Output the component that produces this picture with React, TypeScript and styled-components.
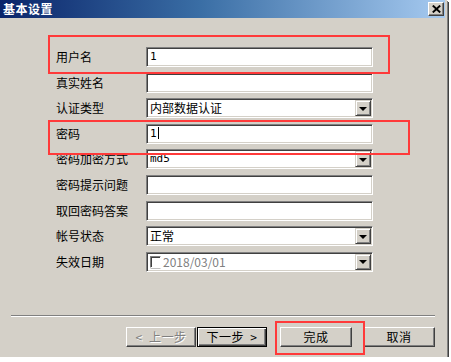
import React from "react";
import styled, { createGlobalStyle } from "styled-components";

const GlobalStyle = createGlobalStyle`
  body {
    margin: 0;
    background: #ffffff;
    font-family: "Noto Sans CJK SC", "Liberation Sans", sans-serif;
  }
`;

const Dialog = styled.div`
  position: relative;
  width: 447px;
  height: 357px;
  padding-right: 2px;
  box-sizing: border-box;
  background: #d4d0c8;
  box-shadow: 1px 1px 0 #808080, 2px 2px 0 #404040;
  display: flex;
  flex-direction: column;
`;

const TitleBar = styled.div`
  height: 18px;
  display: flex;
  align-items: center;
  justify-content: space-between;
  padding: 0 1px 0 3px;
  background: linear-gradient(to right, #0a246a 0%, #3a6ea5 45%, #a6caf0 100%);
`;

const Title = styled.span`
  color: #ffffff;
  font-size: 12px;
  font-weight: bold;
  line-height: 18px;
  letter-spacing: 0.5px;
`;

const CloseButton = styled.div`
  width: 16px;
  height: 14px;
  box-sizing: border-box;
  background: #d4d0c8;
  border: 1px solid;
  border-color: #ffffff #404040 #404040 #ffffff;
  box-shadow: inset -1px -1px 0 #808080;
  display: flex;
  align-items: center;
  justify-content: center;
`;

const Form = styled.div`
  display: flex;
  flex-direction: column;
  gap: 5.6px;
  padding: 29px 0 0 56px;
`;

const Row = styled.div`
  display: flex;
  align-items: center;
  height: 20px;
`;

const Label = styled.span`
  width: 90px;
  font-size: 12px;
  color: #000000;
  line-height: 20px;
`;

const Field = styled.div<{ $mono?: boolean }>`
  width: 227px;
  height: 20px;
  box-sizing: border-box;
  background: #ffffff;
  border: 1px solid;
  border-color: #808080 #ffffff #ffffff #808080;
  box-shadow: inset 1px 1px 0 #404040, inset -1px -1px 0 #d4d0c8;
  display: flex;
  align-items: center;
  padding: 1px 1px 1px 3px;
  font-size: ${(p) => (p.$mono ? "11px" : "12px")};
  font-family: ${(p) =>
    p.$mono
      ? '"DejaVu Sans Mono", "Liberation Mono", monospace'
      : '"Noto Sans CJK SC", "Liberation Sans", sans-serif'};
  color: #000000;
`;

const FieldText = styled.span<{ $muted?: boolean }>`
  flex: 1;
  line-height: 16px;
  color: ${(p) => (p.$muted ? "#808080" : "#000000")};
`;

const Caret = styled.span`
  display: inline-block;
  width: 1px;
  height: 12px;
  margin-left: 1px;
  vertical-align: -2px;
  background: #000000;
`;

const DropButton = styled.div`
  width: 16px;
  height: 16px;
  box-sizing: border-box;
  background: #d4d0c8;
  border: 1px solid;
  border-color: #d4d0c8 #404040 #404040 #d4d0c8;
  box-shadow: inset 1px 1px 0 #ffffff, inset -1px -1px 0 #808080;
  display: flex;
  align-items: center;
  justify-content: center;
`;

const Arrow = styled.span`
  width: 0;
  height: 0;
  border-left: 4px solid transparent;
  border-right: 4px solid transparent;
  border-top: 4px solid #000000;
  margin-top: 1px;
`;

const CheckBox = styled.span`
  width: 11px;
  height: 12px;
  box-sizing: border-box;
  margin-right: 2px;
  background: #ffffff;
  border: 1px solid;
  border-color: #808080 #ffffff #ffffff #808080;
  box-shadow: inset 1px 1px 0 #404040, 0 1px 0 -0.5px #808080;
`;

const Separator = styled.div`
  margin: 43px 10px 0 11px;
  height: 0;
  border-top: 1px solid #808080;
  border-bottom: 1px solid #ffffff;
`;

const ButtonRow = styled.div`
  display: flex;
  justify-content: flex-end;
  padding-right: 10px;
  margin-top: 10px;
`;

const Button = styled.div<{ $default?: boolean; $disabled?: boolean; $gap?: number; $w?: number }>`
  width: ${(p) => p.$w ?? 71}px;
  height: 20px;
  margin-left: ${(p) => p.$gap ?? 0}px;
  box-sizing: border-box;
  display: flex;
  align-items: center;
  justify-content: center;
  font-size: 12px;
  background: #d4d0c8;
  border: 1px solid;
  border-color: ${(p) => (p.$default ? "#000000" : "#ffffff #404040 #404040 #ffffff")};
  box-shadow: ${(p) =>
    p.$default
      ? "inset 1px 1px 0 #ffffff, inset -1px -1px 0 #404040, inset -2px -2px 0 #808080"
      : "inset -1px -1px 0 #808080"};
  color: ${(p) => (p.$disabled ? "#808080" : "#000000")};
  text-shadow: ${(p) => (p.$disabled ? "1px 1px 0 #ffffff" : "none")};
  letter-spacing: 0.5px;
  white-space: pre;
`;

const Highlight = styled.div<{ $x: number; $y: number; $w: number; $h: number }>`
  position: absolute;
  left: ${(p) => p.$x}px;
  top: ${(p) => p.$y}px;
  width: ${(p) => p.$w}px;
  height: ${(p) => p.$h}px;
  box-sizing: border-box;
  border: 2px solid #ff3a3a;
  pointer-events: none;
`;

type FieldRow = {
  label: string;
  value?: React.ReactNode;
  select?: boolean;
  mono?: boolean;
};

const rows: FieldRow[] = [
  { label: "用户名", value: "1", mono: true },
  { label: "真实姓名" },
  { label: "认证类型", value: "内部数据认证", select: true },
  { label: "密码", value: <>1<Caret /></>, mono: true },
  { label: "密码加密方式", value: "md5", select: true, mono: true },
  { label: "密码提示问题" },
  { label: "取回密码答案" },
  { label: "帐号状态", value: "正常", select: true },
];

export default function App() {
  return (
    <>
      <GlobalStyle />
      <Dialog>
        <TitleBar>
          <Title>基本设置</Title>
          <CloseButton>
            <svg width="9" height="8" viewBox="0 0 9 8">
              <path d="M0.8 0.6 L8.2 7.4 M8.2 0.6 L0.8 7.4" stroke="#000" strokeWidth="2" />
            </svg>
          </CloseButton>
        </TitleBar>

        <Form>
          {rows.map((r) => (
            <Row key={r.label}>
              <Label>{r.label}</Label>
              <Field $mono={r.mono}>
                <FieldText>{r.value}</FieldText>
                {r.select && (
                  <DropButton>
                    <Arrow />
                  </DropButton>
                )}
              </Field>
            </Row>
          ))}
          <Row>
            <Label>失效日期</Label>
            <Field>
              <CheckBox />
              <FieldText $muted>2018/03/01</FieldText>
              <DropButton>
                <Arrow />
              </DropButton>
            </Field>
          </Row>
        </Form>

        <Separator />

        <ButtonRow>
          <Button $disabled $w={70}>{"<  上一步"}</Button>
          <Button $default $gap={1} $w={70}>{"下一步  >"}</Button>
          <Button $gap={13} $w={72}>完成</Button>
          <Button $gap={11} $w={72}>取消</Button>
        </ButtonRow>

        <Highlight $x={48} $y={35} $w={342} $h={39} />
        <Highlight $x={48} $y={120} $w={362} $h={35} />
        <Highlight $x={275} $y={321} $w={90} $h={34} />
      </Dialog>
    </>
  );
}
